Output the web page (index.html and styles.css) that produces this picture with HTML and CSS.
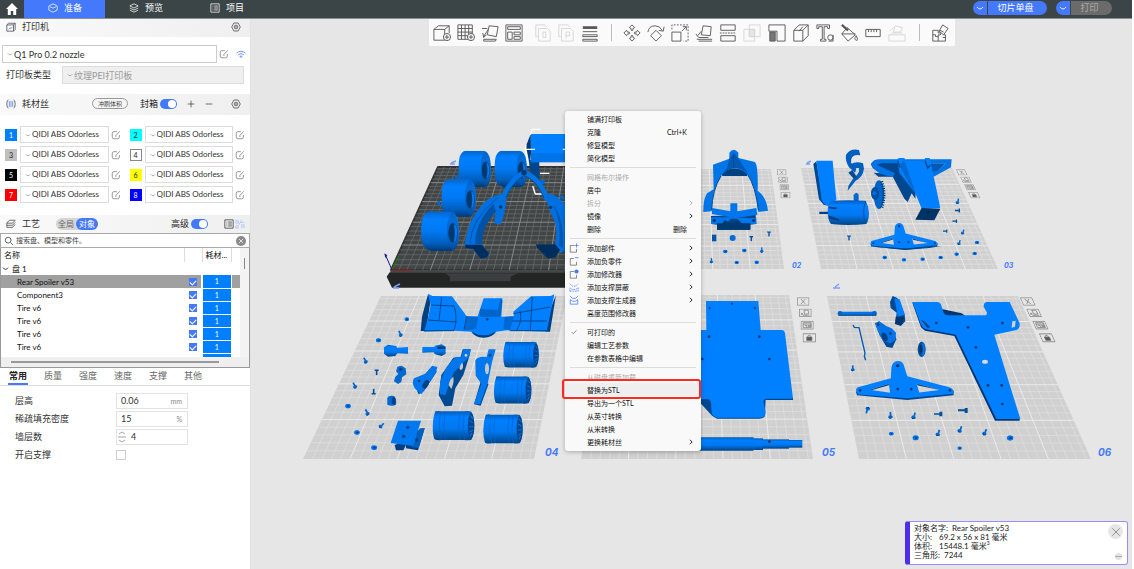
FILE: index.html
```html
<!DOCTYPE html>
<html lang="zh-CN">
<head>
<meta charset="utf-8">
<title>准备</title>
<link rel="stylesheet" href="styles.css">
</head>
<body>
<svg class="defs" aria-hidden="true">
  <defs>
    <symbol id="i-edit" viewBox="0 0 12 12"><path d="M7 2H3.500Q1.500 2 1.500 4v4.500Q1.500 10.500 3.500 10.500H8q2 0 2-2V6M5.500 7l5-5.500M5 7.500h1.500"/></symbol>
    <symbol id="i-gear" viewBox="0 0 12 12"><path d="M3.500 1.200h5L11.200 6 8.500 10.800h-5L.8 6z"/><circle cx="6" cy="6" r="2.200"/><circle cx="6" cy="6" r=".5"/></symbol>
    <symbol id="i-down" viewBox="0 0 8 8"><path d="M1 3q1.500 2 3 2t3-2"/></symbol>
    <symbol id="i-right" viewBox="0 0 8 8"><path d="M2.500 1l3 3-3 3"/></symbol>
    <symbol id="i-list" viewBox="0 0 12 12"><path d="M1 1h10v10H1zM3 3.700h1M5 3.700h4.500M3 6h1M5 6h4.500M3 8.300h1M5 8.300h4.500"/></symbol>
    <symbol id="i-layers" viewBox="0 0 12 12"><path d="M6 1l5 2.500L6 6 1 3.500zM1 6l5 2.500L11 6M1 8.500L6 11l5-2.500"/></symbol>
    <linearGradient id="g-round" x1="0" y1="0" x2="0" y2="1"><stop offset="0" stop-color="#0066cc"/><stop offset=".2" stop-color="#007fff"/><stop offset=".5" stop-color="#0079f2"/><stop offset=".8" stop-color="#005fbf"/><stop offset="1" stop-color="#003a75"/></linearGradient>
    <linearGradient id="g-drum" x1="0" y1="0" x2="0" y2="1"><stop offset="0" stop-color="#005bb8"/><stop offset=".2" stop-color="#007fff"/><stop offset=".6" stop-color="#0078f0"/><stop offset="1" stop-color="#004486"/></linearGradient>
    <symbol id="tire" viewBox="0 0 100 112" preserveAspectRatio="none">
      <path fill="url(#g-round)" d="M22 0H76Q94 2 98 30Q102 60 98 84Q94 110 80 111H28Q6 108 2 82Q-2 50 3 24Q7 3 22 0z"/>
      <path fill="#0058b0" opacity=".5" d="M82 4Q97 12 99 50Q99 96 84 109Q68 96 68 56Q68 16 82 4z"/>
      <ellipse cx="84" cy="60" rx="12" ry="27" fill="#003870"/>
      <path fill="#0079f2" d="M86 36Q96 40 95 62Q94 84 86 86Q92 62 86 36z"/>
    </symbol>
    <symbol id="drum" viewBox="0 0 120 90" preserveAspectRatio="none">
      <path fill="url(#g-drum)" d="M8 2Q16 0 24 2H90Q100 0 110 3Q118 20 118 45T110 87Q100 90 90 88H26Q14 90 6 86Q0 70 1 45T8 2z"/>
      <ellipse cx="109" cy="45" rx="9" ry="38" fill="#00458c"/>
      <path d="M106 14l8 10M104 30l10 6M104 48h12M105 64l9-6M107 76l5-10" stroke="#0077ee" stroke-width="3"/>
      <path d="M24 3Q15 45 26 87M36 3Q28 45 36 87M78 3Q70 45 78 87M90 3Q83 45 90 87" fill="none" stroke="#0066cc" stroke-width="2"/>
    </symbol>
    <symbol id="screw" viewBox="0 0 20 24" overflow="visible"><path fill="#0068d1" d="M7 2l6-1 1 12 4 3-1 5-8 3-6-4 1-6 4-1z"/><path fill="#003a75" d="M3 20l6 4 8-3-7 0z"/></symbol>
    <symbol id="bolt" viewBox="0 0 20 24"><path fill="#00509f" d="M2 1h15l1 6h-5v15l-6 1V7L2 6z"/></symbol>
    <symbol id="nut" viewBox="0 0 20 16"><path fill="#0074e8" d="M3 2l6-2 8 2 3 5-3 7-8 2-7-3L0 7z"/><ellipse cx="11" cy="8" rx="4" ry="3" fill="#003f80"/></symbol>
    <symbol id="arm" viewBox="0 0 300 118" overflow="visible">
      <path fill="#00478f" d="M0 92l4 12 152 14 140-14v-14z"/>
      <path fill="#007fff" d="M108 18Q112 0 130 0Q144 2 147 18L156 46L286 80Q300 88 296 99L156 113L8 101Q-4 91 4 80L106 52z"/>
      <path fill="#d3d3d3" d="M42 87L104 96L100 69zM184 68L192 95L254 88z"/>
      <path fill="#00478f" d="M42 87l58-18v4l-50 15zM184 68l70 20-66-14z"/>
      <g fill="#003870"><circle cx="127" cy="14" r="5"/><circle cx="127" cy="85" r="4"/><circle cx="168" cy="85" r="4"/><circle cx="13" cy="89" r="4"/><circle cx="285" cy="89" r="4"/></g>
    </symbol>
    <symbol id="p-close" viewBox="0 0 36 24"><path d="M1 1h34v22H1zM12 5l12 14M24 5L12 19"/></symbol>
    <symbol id="p-arrange" viewBox="0 0 36 24"><path d="M1 1h34v22H1zM14 5l12-1 2 11-12 1zM6 12l5 7h19M5 17l7-4"/></symbol>
    <symbol id="p-layout" viewBox="0 0 36 24"><path d="M1 1h34v22H1zM7 5h22v14H7zM7 9h22M11 13h6v6M20 13h9M20 16h9"/></symbol>
    <symbol id="p-lock" viewBox="0 0 36 24"><path d="M1 1h34v22H1zM14 11V7q4-4 8 0v4"/><path class="solid" d="M11 10h14v9H11z"/></symbol>
  </defs>
</svg>

<div class="app">
  <header class="topbar">
    <button class="home" aria-label="主页"><svg viewBox="0 0 12 12"><path d="M6 0L0 6h1.800v6h3V8h2.400v4h3V6H12z"/></svg></button>
    <nav class="main-tabs">
      <button class="main-tab active"><svg class="ico" viewBox="0 0 12 12"><path d="M6 1l5 2.500v5L6 11 1 8.500v-5zM2.500 4.500L6 6.200l3.500-1.700"/></svg>准备</button>
      <button class="main-tab"><svg class="ico"><use href="#i-layers"/></svg>预览</button>
      <button class="main-tab"><svg class="ico"><use href="#i-list"/></svg>项目</button>
    </nav>
    <div class="actions">
      <div class="split"><button class="split-more" aria-label="切片选项"><svg class="ico"><use href="#i-down"/></svg></button><button class="split-main wide">切片单盘</button></div>
      <div class="split"><button class="split-more" aria-label="打印选项"><svg class="ico"><use href="#i-down"/></svg></button><button class="split-main off" disabled>打印</button></div>
    </div>
  </header>

  <div class="body">
    <aside class="sidebar">
      <div class="head">
        <svg class="ico" viewBox="0 0 12 12"><path d="M1 3.500L3 1.500h8v7.500l-2 2H1zM1 3.500h8v7.500M9 3.500l2-2"/><path class="accent" d="M3 9l2-2 1 1 1.500-2"/></svg>
        <h2>打印机</h2>
        <button class="plain push" aria-label="打印机设置"><svg class="ico"><use href="#i-gear"/></svg></button>
      </div>
      <div class="printer">
        <div class="line">
          <span class="select big"><svg class="ico"><use href="#i-down"/></svg><select aria-label="打印机"><option>Q1 Pro 0.2 nozzle</option></select></span>
          <button class="plain" aria-label="编辑"><svg class="ico soft"><use href="#i-edit"/></svg></button>
          <button class="plain wifi" aria-label="连接"><svg class="ico" viewBox="0 0 12 12"><path d="M.5 5Q6 .5 11.500 5M2.500 7Q6 4 9.500 7M4.500 9Q6 7.500 7.500 9L6 10z"/></svg></button>
        </div>
        <div class="line plate-line">
          <label for="plate">打印板类型</label>
          <span class="select big off"><svg class="ico"><use href="#i-down"/></svg><select id="plate" disabled><option>纹理PEI打印板</option></select></span>
        </div>
      </div>

      <div class="head tall">
        <svg class="ico" viewBox="0 0 12 12"><path d="M3 1Q1 1 1 6t2 5M9 1q2 0 2 5T9 11"/><path class="accent" d="M4 2.500v7M6 2.500v7M8 2.500v7"/></svg>
        <h2>耗材丝</h2>
        <button class="flush push">冲刷体积</button>
        <label class="toggle">封箱<input type="checkbox" role="switch" checked></label>
        <button class="plain" aria-label="添加"><svg class="ico" viewBox="0 0 12 12"><path d="M6 2v8M2 6h8"/></svg></button>
        <button class="plain" aria-label="移除"><svg class="ico" viewBox="0 0 12 12"><path d="M2 6h8"/></svg></button>
        <button class="plain gear" aria-label="耗材设置"><svg class="ico"><use href="#i-gear"/></svg></button>
      </div>
      <div class="filaments">
        <div class="fil"><b class="chip c1">1</b><span class="select"><svg class="ico"><use href="#i-down"/></svg><select aria-label="耗材 1"><option>QIDI ABS Odorless</option></select></span><button class="plain" aria-label="编辑 1"><svg class="ico soft"><use href="#i-edit"/></svg></button></div>
        <div class="fil"><b class="chip c2">2</b><span class="select"><svg class="ico"><use href="#i-down"/></svg><select aria-label="耗材 2"><option>QIDI ABS Odorless</option></select></span><button class="plain" aria-label="编辑 2"><svg class="ico soft"><use href="#i-edit"/></svg></button></div>
        <div class="fil"><b class="chip c3">3</b><span class="select"><svg class="ico"><use href="#i-down"/></svg><select aria-label="耗材 3"><option>QIDI ABS Odorless</option></select></span><button class="plain" aria-label="编辑 3"><svg class="ico soft"><use href="#i-edit"/></svg></button></div>
        <div class="fil"><b class="chip c4">4</b><span class="select"><svg class="ico"><use href="#i-down"/></svg><select aria-label="耗材 4"><option>QIDI ABS Odorless</option></select></span><button class="plain" aria-label="编辑 4"><svg class="ico soft"><use href="#i-edit"/></svg></button></div>
        <div class="fil"><b class="chip c5">5</b><span class="select"><svg class="ico"><use href="#i-down"/></svg><select aria-label="耗材 5"><option>QIDI ABS Odorless</option></select></span><button class="plain" aria-label="编辑 5"><svg class="ico soft"><use href="#i-edit"/></svg></button></div>
        <div class="fil"><b class="chip c6">6</b><span class="select"><svg class="ico"><use href="#i-down"/></svg><select aria-label="耗材 6"><option>QIDI ABS Odorless</option></select></span><button class="plain" aria-label="编辑 6"><svg class="ico soft"><use href="#i-edit"/></svg></button></div>
        <div class="fil"><b class="chip c7">7</b><span class="select"><svg class="ico"><use href="#i-down"/></svg><select aria-label="耗材 7"><option>QIDI ABS Odorless</option></select></span><button class="plain" aria-label="编辑 7"><svg class="ico soft"><use href="#i-edit"/></svg></button></div>
        <div class="fil"><b class="chip c8">8</b><span class="select"><svg class="ico"><use href="#i-down"/></svg><select aria-label="耗材 8"><option>QIDI ABS Odorless</option></select></span><button class="plain" aria-label="编辑 8"><svg class="ico soft"><use href="#i-edit"/></svg></button></div>
      </div>

      <div class="head process">
        <svg class="ico" viewBox="0 0 12 12"><path d="M4 1.500h7L8 5H1zM1 7.500h7l3-3.500M1 10h7l3-3.500M1 5v5"/></svg>
        <h2>工艺</h2>
        <div class="scope"><button>全局</button><button class="on">对象</button></div>
        <label class="toggle push">高级<input type="checkbox" role="switch" checked></label>
        <button class="plain list-btn" aria-label="列表"><svg class="ico"><use href="#i-list"/></svg></button>
        <button class="plain pale" aria-label="参数"><svg class="ico" viewBox="0 0 12 12"><path d="M1 2h3v3H1zM8 1l-4 7M6 4h5M3 8H1v3h3zM8 7h3v3H8z"/></svg></button>
      </div>
      <div class="search">
        <svg class="ico" viewBox="0 0 12 12"><circle cx="5" cy="5" r="3.500"/><path d="M8 8l3 3"/></svg>
        <input type="text" aria-label="搜索" placeholder="搜索盘、模型和零件。">
        <button class="clear" aria-label="清除"><svg class="ico" viewBox="0 0 12 12"><path d="M3.500 3.500l5 5M8.500 3.500l-5 5"/></svg></button>
      </div>
      <div class="tree">
        <div class="tree-view">
          <table>
            <colgroup><col><col class="col-check"><col class="col-fil"><col class="col-end"></colgroup>
            <thead><tr><th>名称</th><th></th><th>耗材...</th><th></th></tr></thead>
            <tbody>
              <tr><td class="group"><svg class="ico"><use href="#i-down"/></svg>盘 1</td><td></td><td></td><td></td></tr>
              <tr class="sel"><td>Rear Spoiler v53</td><td><input type="checkbox" aria-label="Rear Spoiler v53" checked></td><td class="num">1</td><td></td></tr>
              <tr><td>Component3</td><td><input type="checkbox" aria-label="Component3" checked></td><td class="num">1</td><td></td></tr>
              <tr><td>Tire v6</td><td><input type="checkbox" aria-label="Tire v6" checked></td><td class="num">1</td><td></td></tr>
              <tr><td>Tire v6</td><td><input type="checkbox" aria-label="Tire v6" checked></td><td class="num">1</td><td></td></tr>
              <tr><td>Tire v6</td><td><input type="checkbox" aria-label="Tire v6" checked></td><td class="num">1</td><td></td></tr>
              <tr><td>Tire v6</td><td><input type="checkbox" aria-label="Tire v6" checked></td><td class="num">1</td><td></td></tr>
              <tr><td></td><td></td><td class="num"></td><td></td></tr>
            </tbody>
          </table>
          <div class="vbar"><i></i></div>
        </div>
        <div class="hbar"><i></i></div>
      </div>

      <nav class="tabs">
        <button class="on">常用</button><button>质量</button><button>强度</button><button>速度</button><button>支撑</button><button>其他</button>
      </nav>
      <div class="fields">
        <label for="f1">层高</label><span class="field"><input id="f1" type="text" value="0.06"><em>mm</em></span>
        <label for="f2">稀疏填充密度</label><span class="field"><input id="f2" type="text" value="15"><em>%</em></span>
        <label for="f3">墙层数</label><span class="field spin"><svg class="ico" viewBox="0 0 8 14"><path d="M1 4l3-2 3 2M0 7h8M1 10l3 2 3-2"/></svg><input id="f3" type="text" value="4"></span>
        <label for="f4">开启支撑</label><input id="f4" class="box" type="checkbox">
      </div>
    </aside>

    <main class="stage">
      <svg class="scene" viewBox="251 19 881 550" preserveAspectRatio="xMinYMin slice" role="img" aria-label="打印盘">
        <g id="plates"></g>

        <!-- plate 1 -->
        <svg x="380" y="110" width="190" height="190" viewBox="0 0 570 570" overflow="visible">
          <path fill="#454848" d="M34 480H620V489H28z"/>
          <path fill="#242525" d="M28 488H620V533H36L20 500z"/><path fill="#3b3e3e" d="M195 490H415L392 500V514H210V500z"/>
          <path d="M36 480L16 434" stroke="#1c1c8c" stroke-width="3"/><path d="M36 478L56 438" stroke="#118811" stroke-width="3"/><path d="M36 480H96" stroke="#a31515" stroke-width="3"/>
          <path fill="#1c1c8c" d="M13 430l9 6-6 8z"/>
          <g fill="#0068d1"><path d="M224 198l10-5 2 8-9 5zM168 276l12-4 2 20-9-10zM478 210h16v12h-16zM533 256l18 2 12 12-18-2z"/></g>
          <use href="#tire" x="235" y="122" width="98" height="110"/>
          <use href="#tire" x="343" y="122" width="98" height="110"/>
          <use href="#tire" x="184" y="207" width="104" height="114"/>
          <use href="#tire" x="123" y="304" width="114" height="120"/>
          <path fill="#00468c" d="M446 150h32v76l-26-34z"/><path fill="#007fff" d="M452 72H620V157H452z"/><path fill="#0068d1" opacity=".5" d="M452 130H620V157H450z"/><path fill="#003a75" d="M452 72l-14 36 10 50 5-28z"/>
          <path fill="none" stroke="#fff" stroke-width="4" d="M482 58H457l-6 16M439 118h26M548 118h14M480 190h28M458 228l8 24h20M438 104l-2 16 9 44"/>
          <path fill="none" stroke="#0073e6" stroke-width="15" d="M366 270Q392 206 432 188Q478 202 502 270"/>
          <path fill="none" stroke="#0052a5" stroke-width="3" d="M374 272Q396 214 432 197Q470 210 492 264"/>
          <path fill="#0070e0" d="M254 408Q260 330 316 274Q340 256 374 250L380 268Q374 314 362 344L343 340L346 302Q304 340 305 402L328 432L322 442L302 446L280 420L257 414z"/>
          <path fill="#0052a5" d="M286 402Q284 340 340 282L348 304Q308 344 305 402z"/><path fill="none" stroke="#0055aa" stroke-width="3" d="M270 400Q272 330 352 264"/>
          <path fill="#002e5c" d="M255 404H305L327 430L322 442L302 446L280 418L257 414z"/>
          <path fill="#0070e0" d="M496 262L508 250Q546 262 576 312V410L540 430L524 405Q538 350 512 310z"/>
          <path fill="#0058b0" d="M520 284Q552 320 548 414L536 406Q546 340 520 284z"/><path fill="#002e5c" d="M468 403H526L540 420L526 442L505 446L470 412z"/>
          <g fill="#003870"><circle cx="432" cy="188" r="8"/><circle cx="362" cy="291" r="5"/><circle cx="512" cy="292" r="5"/><circle cx="312" cy="433" r="4"/><circle cx="494" cy="433" r="4"/></g>
        </svg>

        <!-- plate 4 -->
        <svg x="300" y="285" width="270" height="180" viewBox="0 0 810 540" overflow="visible">
          <path fill="#003f80" d="M362 138L366 95L384 28L392 45L378 138z"/><path fill="#003f80" d="M768 30L750 140H736L752 70z"/>
          <path fill="#007fff" d="M384 26L397 33L456 34L500 94H533L551 40H607V52L604 95L642 94L640 80L693 34L752 33L763 28L740 140L620 136L588 140Q578 156 550 157Q524 154 514 140L462 137L372 140L384 100L392 60z"/>
          <path fill="#0064c8" d="M540 72l54 3 8-35 5 8-6 47h-62z"/><path fill="#0068d1" d="M500 94l34 3-6 35-34 4zM614 96l28-2-12 40-20-2z"/>
          <path fill="none" stroke="#00498f" stroke-width="3" d="M392 60l70 3M384 105l86 6M425 36l-8 70M462 62q12 40 0 74M500 94l-8 40M640 86l110-20M660 78q8 30-10 58M697 36l-6 98M636 108h104M372 137h90M630 137h110"/>
          <path fill="#003f80" d="M514 140Q550 162 588 140Q578 156 550 158Q524 156 514 140z"/><circle cx="562" cy="103" r="4" fill="#003f80"/>
          <use href="#drum" x="609" y="169" width="109" height="80"/><use href="#drum" x="581" y="273" width="115" height="84"/><use href="#drum" x="397" y="377" width="128" height="90"/><use href="#drum" x="549" y="387" width="121" height="90"/>
          <g fill="url(#g-drum)"><path d="M252 187l12-8 24 4 4 5 32-2v20l-32-1-6 8-22 2-12-9z"/><path d="M367 186h36l2-4 20-4 12 8v20l-12 7-20-5-4-6-34 1z"/></g>
          <path fill="#003f80" d="M412 184h24v8h-24z"/>
          <path fill="#0068d1" d="M292 245l12-3 13 8 2 18-13 9-2 14-10 6-12-8 4-14 9-8-7-8z"/><circle cx="302" cy="253" r="5" fill="#003f80"/>
          <path fill="#003f80" d="M340 290l16 38 16-10 38-58-6-12-46 30z"/><path fill="#0076ec" d="M342 280L376 266L396 242L412 246L408 262L384 300L364 328L344 310Q334 292 342 280z"/><ellipse cx="377" cy="298" rx="8" ry="14" fill="#003f80" transform="rotate(30 377 298)"/><circle cx="357" cy="288" r="4" fill="#003f80"/>
          <path fill="#004a94" d="M416 330L424 270L460 218L482 215L488 193H512L508 214L490 270L466 310L456 362L434 364z"/>
          <path fill="#0076ec" d="M420 290L440 246L466 216H484L490 193H513L507 216L480 244L462 262L436 330L420 328z"/>
          <path fill="#c8c8c8" d="M446 300q4-20 14-24q4 14-6 36zM478 250q4-16 10-16q4 18-6 22z"/><circle cx="498" cy="211" r="4" fill="#d3d3d3"/>
          <path fill="#004a94" d="M542 290l-20 68 20 4 24-66z"/><path fill="#0078f0" d="M526 226Q534 212 560 216L566 193H587L576 232L564 292L540 358L522 356L544 296L527 272z"/><ellipse cx="561" cy="251" rx="6" ry="17" fill="#c8c8c8"/><circle cx="570" cy="211" r="4" fill="#003f80"/>
          <path fill="#003f80" d="M284 480l20-8 14 8-8 16H288zM318 474l28-30 14-12 14-2-20 66-36-6z"/><path fill="#0060c0" d="M360 430h14l-18 60-22-4z"/><path fill="#0078f0" d="M294 407H363L340 483L272 474z"/><circle cx="323" cy="427" r="5" fill="#003f80"/><circle cx="311" cy="454" r="5" fill="#003f80"/><circle cx="350" cy="465" r="5" fill="#003f80"/>
          <path fill="#0068d1" d="M262 338q4-8 20-5 8 6 6 26-12 6-26 0z"/><ellipse cx="281" cy="348" rx="6" ry="11" fill="#003f80"/>
          <use href="#nut" x="313" y="96" width="15" height="13"/><use href="#nut" x="227" y="159" width="17" height="14"/><use href="#nut" x="135" y="356" width="18" height="15"/><use href="#nut" x="162" y="435" width="18" height="15"/><use href="#nut" x="213" y="480" width="19" height="16"/>
          <g transform="rotate(-25 300 146)"><use href="#screw" x="291" y="136" width="18" height="20"/></g><g transform="rotate(-25 195 226)"><use href="#screw" x="186" y="216" width="18" height="20"/></g><g transform="rotate(-25 163 301)"><use href="#screw" x="154" y="291" width="18" height="20"/></g><g transform="rotate(-25 200 381)"><use href="#screw" x="191" y="371" width="18" height="21"/></g><g transform="rotate(45 245 421)"><use href="#screw" x="235" y="411" width="20" height="20"/></g><use href="#bolt" x="222" y="251" width="16" height="22"/><g transform="rotate(180 221 320)"><use href="#bolt" x="213" y="309" width="16" height="22"/></g>
        </svg>

        <!-- plates 2 and 3 -->
        <svg x="695" y="140" width="335" height="140" viewBox="0 0 1005 420" overflow="visible">
          <path fill="#003f80" d="M80 100Q116 70 158 100L156 108H82z"/>
          <path fill="#0075e8" d="M103 38Q116 20 130 38V54L180 66Q190 78 188 152Q214 170 219 212L190 216Q184 140 158 104Q116 62 78 108Q50 150 50 214L25 216Q24 180 36 160L56 148L54 74L103 56z"/>
          <path fill="#0059b3" d="M103 56L116 38L130 54L158 100Q116 66 80 104L96 84z"/><path fill="none" stroke="#00478f" stroke-width="3" d="M78 108Q52 150 50 210M158 104Q182 140 190 210M116 40v44"/>
          <path fill="#00448a" d="M48 228L182 225L184 252L166 254V270H66V254L48 252z"/>
          <path fill="#0076ec" d="M51 204L106 214V190H127V214L184 204L187 224L128 234H184V252H142L126 236H108L92 252H48V232H106L51 222z"/>
          <path fill="#003870" d="M66 250H166V268H66zM90 240l16 10H82zM130 240l10 10h-26z"/><circle cx="58" cy="241" r="5" fill="#003870"/><circle cx="176" cy="241" r="5" fill="#003870"/>
          <path fill="#0055aa" d="M51 284h13v20H51z"/><circle cx="113" cy="294" r="9" fill="#006ad6"/>
          <use href="#bolt" x="162" y="286" width="14" height="20"/><use href="#bolt" x="215" y="273" width="14" height="18"/><use href="#screw" x="193" y="320" width="14" height="19"/><use href="#screw" x="42" y="352" width="14" height="19"/><use href="#nut" x="84" y="328" width="14" height="13"/><use href="#nut" x="141" y="325" width="14" height="13"/><use href="#nut" x="118" y="362" width="14" height="11"/><use href="#nut" x="178" y="361" width="14" height="12"/>

          <path fill="#00478f" d="M355 72L364 64L386 186L404 198L386 194L372 178z"/><path fill="#007fff" d="M364 62H413L424 180L404 198Q386 196 380 180z"/>
          <path fill="#0068d1" d="M476 166q7-14 15-2v22h-15z"/><path fill="url(#g-drum)" d="M408 184Q440 178 512 182Q522 200 522 220T514 252Q460 258 408 252Q398 240 398 215T408 184z"/><path fill="#003f80" d="M373 215h26v7h-26zM402 200l26 3-6 5-20-3zM402 226l30 12v5l-30-7z"/><path d="M512 184q-12 34 0 68" fill="none" stroke="#00529f" stroke-width="3"/>
          <path fill="#0060c0" d="M453 44Q466 24 492 30L496 46Q466 40 468 68L484 86L480 98L462 82Q450 62 453 44z"/><path fill="#0060c0" d="M468 72Q484 62 504 70L507 86Q504 110 482 122L458 152L460 138L474 116Q496 100 492 84H470z"/><path fill="#004a94" d="M460 98l12-8 14 22-6 8z"/>
          <ellipse cx="552" cy="164" rx="16" ry="43" fill="#0064c8"/><path d="M560 124q14 40 0 80" fill="none" stroke="#003870" stroke-width="9" stroke-dasharray="3 4"/><ellipse cx="540" cy="160" rx="12" ry="19" fill="#0050a0"/><circle cx="538" cy="160" r="6" fill="#0070e0"/>
          <path fill="#00478f" d="M528 72L540 60H640L650 110H550L536 98L560 100Q530 88 528 72z"/><path fill="#0073e6" d="M528 72Q534 56 560 58H770L768 82L716 110L706 96L730 90L752 70L700 70H560L546 74L600 100V112Q540 104 528 72z"/><path fill="#005ab4" d="M700 70h52l-24 22-22 5z"/>
          <path fill="#00478f" d="M594 112L606 84L662 160L661 176L650 160L638 186L628 176z"/><path fill="#007fff" d="M606 58L612 54H628L632 62L688 62L690 54H704L714 100L736 204L680 206L661 160L614 100z"/><path fill="#003366" d="M680 204L736 206L718 241L661 239z"/><path fill="#0068d1" d="M628 62l34 98-8-8-42-78z"/><circle cx="700" cy="217" r="3" fill="#001a33"/><path d="M690 62l8 22 8-8M608 62l6 20" stroke="#00478f" stroke-width="4" fill="none"/>
          <use href="#arm" x="509" y="249" width="238" height="80"/>
          <path fill="#00478f" d="M512 318l118 8 112-8-40 6-72 6z"/>
          <g transform="rotate(15 788 183)"><use href="#screw" x="781" y="174" width="15" height="19"/></g><g transform="rotate(90 787 211)"><use href="#bolt" x="780" y="202" width="15" height="18"/></g><g transform="rotate(90 779 243)"><use href="#bolt" x="772" y="235" width="15" height="16"/></g><g transform="rotate(90 751 273)"><use href="#bolt" x="744" y="266" width="15" height="15"/></g><g transform="rotate(20 804 275)"><use href="#screw" x="797" y="266" width="14" height="19"/></g><g transform="rotate(20 793 307)"><use href="#screw" x="786" y="298" width="14" height="18"/></g><use href="#bolt" x="455" y="284" width="14" height="20"/>
          <use href="#nut" x="838" y="302" width="16" height="11"/><use href="#nut" x="831" y="335" width="16" height="11"/><use href="#nut" x="777" y="337" width="16" height="11"/><use href="#nut" x="729" y="347" width="16" height="11"/><use href="#nut" x="675" y="352" width="16" height="11"/><use href="#nut" x="619" y="354" width="16" height="11"/><use href="#nut" x="562" y="346" width="14" height="13"/>
          <g class="plate-ico"><use href="#p-close" x="245" y="88" width="30" height="18"/><use href="#p-arrange" x="249" y="110" width="30" height="18"/><use href="#p-layout" x="253" y="133" width="30" height="18"/><use href="#p-lock" x="256" y="156" width="31" height="19"/></g>
          <g class="plate-ico" transform="translate(-42 0) skewX(24)"><use href="#p-close" x="785" y="88" width="28" height="18"/><use href="#p-arrange" x="788" y="110" width="28" height="18"/><use href="#p-layout" x="789" y="133" width="30" height="18"/><use href="#p-lock" x="791" y="156" width="30" height="19"/></g>
        </svg>

        <!-- plates 5 and 6 -->
        <svg x="695" y="280" width="439" height="289" viewBox="0 0 1317 867" overflow="visible">
          <path fill="#00478f" d="M0 352h294v8H212l-2 48q-6 8-16 8H66l-14-8z"/><path fill="#007fff" d="M33 63H190L197 150H262Q269 151 270 160L294 356H212Q204 358 206 368L212 396Q212 412 196 413H66Q52 410 50 398L48 368Q46 358 36 357H0V150H34z"/>
          <g fill="#00366e"><circle cx="44" cy="84" r="3"/><circle cx="111" cy="71" r="3"/><circle cx="180" cy="84" r="3"/><circle cx="42" cy="170" r="4"/><circle cx="193" cy="170" r="4"/><circle cx="22" cy="237" r="4"/><circle cx="223" cy="237" r="4"/></g>
          <g fill="url(#g-drum)"><path d="M0 472H174l6 4v32l-6 4H0z"/><path d="M178 475h26v35h-26z"/><path d="M203 478h79v28h-79z"/><path d="M281 480h41v23h-41z"/></g><circle cx="223" cy="485" r="4" fill="#003366"/>
          <path fill="#0074e8" d="M430 95h114v11H430z"/><path fill="#00366e" d="M430 104h114v3H430z"/><circle cx="435" cy="100" r="7" fill="#0064c8"/><circle cx="538" cy="100" r="7" fill="#0064c8"/>
          <path fill="none" stroke="#005ab4" stroke-width="4" d="M474 135l4 7 14 1 18 76-2 10 4 12"/>
          <path fill="#004a94" d="M585 66l8-18 14 6 22 50 2 20-14 14-16-6 4-34-18-14z"/><path fill="#007fff" d="M598 55L614 58L630 104L608 110L604 84z"/><path fill="#00366e" d="M602 110l26 0-8 26-20-4z"/>
          <path fill="#004a94" d="M540 130l12-6 44 30 8 24-12 26-18-4-20-34z"/><path fill="#0074e8" d="M541 132l12-8 12 12 24 8 14 14-2 22-14 10-22-6-16-30z"/><ellipse cx="569" cy="171" rx="8" ry="14" fill="#003f80" transform="rotate(-25 569 171)"/><circle cx="586" cy="161" r="4" fill="#003f80"/><circle cx="550" cy="134" r="4" fill="#003f80"/>
          <ellipse cx="680" cy="208" rx="12" ry="23" fill="#00509f"/><ellipse cx="678" cy="208" rx="5" ry="13" fill="#003366"/><path d="M683 190q7 18 0 36" fill="none" stroke="#0076ec" stroke-width="6"/>
          <path fill="#00366e" d="M652 68L678 142L690 152L778 168L900 422H974V415L880 160L800 100z"/><path fill="#007fff" d="M652 66H728Q738 68 740 80L746 98Q750 106 760 106H868Q876 106 876 98L866 80Q866 68 874 66H944L974 130Q976 146 964 150L898 164L976 417H904L782 164L694 148Q682 144 678 134z"/>
          <path fill="#003f80" d="M678 120l8 2 20 20-8 2z"/><path fill="#d3d3d3" d="M952 124l10-2-2 18-10 3z"/><ellipse cx="870" cy="245" rx="9" ry="6" fill="#d8d8d8"/>
          <g fill="#00366e"><circle cx="724" cy="129" r="4"/><circle cx="819" cy="142" r="4"/><circle cx="922" cy="129" r="4"/><circle cx="843" cy="202" r="4"/><circle cx="879" cy="316" r="4"/><circle cx="920" cy="316" r="4"/><circle cx="922" cy="372" r="4"/></g>
          <use href="#arm" x="482" y="243" width="298" height="117"/>
          <use href="#screw" x="465" y="253" width="16" height="23"/><g transform="rotate(200 517 391)"><use href="#screw" x="508" y="380" width="18" height="22"/></g><use href="#screw" x="577" y="394" width="18" height="23"/><g transform="rotate(20 657 407)"><use href="#screw" x="648" y="394" width="18" height="26"/></g><path fill="#00509f" d="M717 400h16v-5h9v14h-9v-5h-16zM789 388h20v-4h9v15h-9v-5h-20z"/><g transform="rotate(20 730 458)"><use href="#screw" x="721" y="447" width="18" height="23"/></g><g transform="rotate(25 796 447)"><use href="#screw" x="787" y="436" width="18" height="23"/></g><g transform="rotate(25 870 456)"><use href="#screw" x="861" y="445" width="18" height="22"/></g>
          <use href="#nut" x="580" y="455" width="18" height="12"/><use href="#nut" x="652" y="465" width="20" height="17"/><use href="#nut" x="785" y="499" width="18" height="11"/><use href="#nut" x="935" y="465" width="21" height="18"/>
          <g class="plate-ico"><use href="#p-close" x="306" y="52" width="37" height="25"/><use href="#p-arrange" x="312" y="86" width="38" height="25"/><use href="#p-layout" x="317" y="122" width="39" height="27"/><use href="#p-lock" x="323" y="159" width="40" height="29"/></g>
          <g class="plate-ico" transform="translate(-29 0) skewX(24)"><use href="#p-close" x="980" y="52" width="37" height="25"/><use href="#p-arrange" x="984" y="86" width="37" height="25"/><use href="#p-layout" x="986" y="122" width="38" height="27"/><use href="#p-lock" x="989" y="159" width="39" height="29"/></g>
        </svg>

        <g class="pencil"><path d="M451 163l5-2M450 164h5M394 287l6-3M393 288h6M807 163l4-2M806 164h4M835 287l4-3M833 288h7"/></g>
        <g class="plate-no"><text x="545" y="456">04</text><text x="822" y="456">05</text><text x="1098" y="456">06</text><text class="small" x="792" y="268">02</text><text class="small" x="1004" y="268">03</text></g>
      </svg>

      <div class="toolbar" role="toolbar">
        <div class="tools four">
          <button aria-label="添加"><svg viewBox="0 0 20 20"><path d="M1 6h12v12H1zM1 6l5-4h12l-5 4M18 2v8"/><circle class="paper" cx="15.500" cy="14.500" r="4"/><path d="M15.500 12v5M13 14.500h5"/></svg></button>
          <button aria-label="添加盘"><svg viewBox="0 0 20 20"><path d="M1 1h16v16H1zM1 5h16M1 9h16M1 13h16M5 1v16M9 1v16M13 1v16"/><circle class="paper" cx="15.500" cy="14.500" r="4"/><path d="M15.500 12v5M13 14.500h5"/></svg></button>
          <button aria-label="自动朝向"><svg viewBox="0 0 20 20"><path d="M9 2l10 1-2 11-10-2zM3 17h14l-1 2H3zM1 5h6M2 10l1 5 3-3M8 6l-5 8"/></svg></button>
          <button aria-label="自动摆放"><svg viewBox="0 0 20 20"><path d="M1 1h18v18H1zM3 3h14v3H3zM3 9h5v8H3zM10 9h7v3h-7zM10 14h7v3h-7z"/></svg></button>
        </div>
        <div class="tools three">
          <button aria-label="拆分为对象" disabled><svg viewBox="0 0 20 20"><path d="M4 14H2V1h10l2 2M5 5h10l3 3v11H5zM10 9h3v6h-3z"/></svg></button>
          <button aria-label="拆分为零件" disabled><svg viewBox="0 0 20 20"><path d="M4 14H2V1h10l2 2M5 5h10l3 3v11H5zM10 16V9h4v4h-4"/></svg></button>
          <button aria-label="可变层高"><svg viewBox="0 0 20 20"><path d="M2 4h16" stroke-width="3"/><path d="M2 8.500h16M2 12h16v2H2zM2 17h16v2H2z"/></svg></button>
        </div>
        <span class="rule"></span>
        <div class="tools many">
          <button aria-label="移动"><svg viewBox="0 0 20 20"><path d="M10 1l3 3-2 1v2H9V5L7 4zM10 19l3-3-2-1v-2H9v2l-2 1zM1 10l3-3 1 2h2v2H5l-1 2zM19 10l-3-3-1 2h-2v2h2l1 2z"/></svg></button>
          <button aria-label="旋转"><svg viewBox="0 0 20 20"><path d="M10 7l6 6-6 6-6-6zM1 9Q2 2 9 2q5 0 8 5M19 3l-1 5-5-1"/></svg></button>
          <button aria-label="缩放"><svg viewBox="0 0 20 20"><path d="M1 9h10v10H1zM12 8l5-5M13 3h4v4"/><path d="M1 6V1h18v18h-5" stroke-dasharray="2 1.500"/></svg></button>
          <button aria-label="放置底面"><svg viewBox="0 0 20 20"><path d="M9 2l9 1-1 10-10-1zM2 17h17M4 19h15M1 11l3 4h11M7 8L3 13"/></svg></button>
          <button aria-label="切割"><svg viewBox="0 0 20 20"><path d="M2 7V1h16v6zM2 13v6h16v-6z"/><path d="M1 10h18" stroke-dasharray="2 1"/></svg></button>
          <button aria-label="网格布尔" disabled><svg viewBox="0 0 20 20"><path d="M1 6h12v13H1zM7 1h12v13H7z"/><path class="tint" d="M7 6h6v8H7z"/></svg></button>
          <button aria-label="支撑绘制"><svg viewBox="0 0 20 20"><path d="M1 5V1h18v18h-9V8H1z"/><path class="dark" d="M2 9h6v10H2z"/></svg></button>
          <button aria-label="Z缝绘制"><svg viewBox="0 0 20 20"><path d="M2 7h10v12H2zM2 7l6-6h10l-6 6M18 1v12l-6 6M8 8l4-5"/></svg></button>
          <button aria-label="文字"><svg viewBox="0 0 20 20"><path d="M1 1h14v4h-2V3H9v14h2v2H5v-2h2V3H3v2H1z"/><circle cx="16" cy="15" r="3"/><path d="M14 19h5v-7"/></svg></button>
          <button aria-label="上色"><svg viewBox="0 0 20 20"><path d="M8 4l9 8-8 7-7-8zM2 11h15M18 13q-3 4 0 5t0-5"/><path d="M2 1l7 6" stroke-width="2.500"/></svg></button>
          <button aria-label="测量"><svg viewBox="0 0 20 20"><path d="M2 6h16v8H2zM5 6v3M8 6v3M11 6v3M14 6v3"/></svg></button>
          <button aria-label="装配" disabled><svg viewBox="0 0 20 20"><path d="M1 12h18v7H1zM4 10h12M8 2l8 2-2 5H6zM2 8l4-4"/></svg></button>
        </div>
        <span class="rule"></span>
        <button class="last" aria-label="装配视图"><svg viewBox="0 0 20 20"><path d="M2 7h6v3q3-1 3 1t-3 1v7H2zM8 19h8v-7h-2M2 12h3v2h3M13 1l6 4-5 7-5-4zM10 7l4 2M13 15h3"/></svg></button>
      </div>

      <ul class="menu" role="menu">
        <li><span>铺满打印板</span></li>
        <li><span>克隆</span><kbd>Ctrl+K</kbd></li>
        <li><span>修复模型</span></li>
        <li><span>简化模型</span></li>
        <li class="sep"></li>
        <li class="off"><span>网格布尔操作</span></li>
        <li><span>居中</span></li>
        <li class="off"><span>拆分</span><svg class="ico arrow"><use href="#i-right"/></svg></li>
        <li><span>镜像</span><svg class="ico arrow"><use href="#i-right"/></svg></li>
        <li><span>删除</span><kbd>删除</kbd></li>
        <li class="sep"></li>
        <li><svg class="ico mark" viewBox="0 0 12 12"><path d="M6 3H1.500v8H9V7"/><path class="accent" d="M9 .5v5M6.500 3h5"/></svg><span>添加部件</span><svg class="ico arrow"><use href="#i-right"/></svg></li>
        <li><svg class="ico mark" viewBox="0 0 12 12"><path d="M6 3H1.500v8H9V7"/><path class="accent" d="M7 2h4.500"/></svg><span>添加负零件</span><svg class="ico arrow"><use href="#i-right"/></svg></li>
        <li><svg class="ico mark" viewBox="0 0 12 12"><path d="M6 3H1.500v8H9V7"/><circle class="dot" cx="9" cy="3" r="2.500"/></svg><span>添加修改器</span><svg class="ico arrow"><use href="#i-right"/></svg></li>
        <li><svg class="ico mark" viewBox="0 0 12 12"><path class="accent" d="M1 2l3 3h4l3-3M1 11V7l3 2h4l3-2v4z" stroke-dasharray="2 1"/></svg><span>添加支撑屏蔽</span><svg class="ico arrow"><use href="#i-right"/></svg></li>
        <li><svg class="ico mark" viewBox="0 0 12 12"><path class="accent" d="M1 1l3 3h4l3-3M1.500 11V5.500l3 2h3l3-2V11z"/></svg><span>添加支撑生成器</span><svg class="ico arrow"><use href="#i-right"/></svg></li>
        <li><span>高度范围修改器</span></li>
        <li class="sep"></li>
        <li><svg class="ico mark" viewBox="0 0 12 12"><path d="M3 6l2 2 4-4"/></svg><span>可打印的</span></li>
        <li><span>编辑工艺参数</span></li>
        <li><span>在参数表格中编辑</span></li>
        <li class="sep"></li>
        <li class="off"><span>从磁盘重新加载</span></li>
        <li class="hot"><span>替换为STL</span></li>
        <li><span>导出为一个STL</span></li>
        <li><span>从英寸转换</span></li>
        <li><span>从米转换</span></li>
        <li><span>更换耗材丝</span><svg class="ico arrow"><use href="#i-right"/></svg></li>
      </ul>

      <section class="info">
        <dl>
          <div><dt>对象名字:</dt><dd>Rear Spoiler v53</dd></div>
          <div class="wide-gap"><dt>大小:</dt><dd>69.2 x 56 x 81 毫米</dd></div>
          <div class="wide-gap"><dt>体积:</dt><dd>15448.1 毫米<sup>3</sup></dd></div>
          <div><dt>三角形:</dt><dd>7244</dd></div>
        </dl>
        <div class="info-btns">
          <button class="x" aria-label="关闭"><svg class="ico" viewBox="0 0 12 12"><path d="M1.500 1.500l9 9M10.500 1.500l-9 9"/></svg></button>
          <button class="min" aria-label="最小化"></button>
        </div>
      </section>
    </main>
  </div>
</div>
<script src="scene.js"></script>
</body>
</html>
```

FILE: styles.css
```css
* { box-sizing: border-box; }
body { margin: 0; padding-right: 2px; background: #fff; color: #333; font: 9px/12px Lato, "Noto Sans CJK SC", sans-serif; }
button, input, select { margin: 0; padding: 0; border: 0; background: none; color: inherit; font: inherit; border-radius: 0; }
input, select { outline: 0; min-width: 0; }
select { appearance: none; opacity: 1; }
h2 { margin: 0; font-size: 9px; font-weight: 400; }
.defs { position: absolute; width: 0; height: 0; }
.ico { display: block; width: 10px; height: 10px; flex: none; fill: none; stroke: currentColor; stroke-width: .9; }
.soft { color: #777; }
.accent { stroke: #4479fb; }
.push { margin-left: auto; }
.app { display: flex; flex-direction: column; height: 100vh; }

.topbar { display: flex; flex: none; height: 19px; background: #3b4446; border-bottom: 1px solid #8b9091; color: #fff; }
.home { width: 24px; display: grid; place-items: center; }
.home svg { width: 12px; height: 12px; fill: #fff; }
.main-tabs { display: flex; }
.main-tab { width: 81px; display: flex; align-items: center; justify-content: center; gap: 6px; padding: 0 0 3px 1px; }
.main-tab.active { background: #4479fb; }
.actions { display: flex; gap: 9px; margin-left: auto; padding: 1px 20px 3px 0; }
.split { display: flex; gap: 1px; }
.split-more { width: 14px; padding-left: 3px; border-radius: 7px 0 0 7px; background: #4479fb; }
.split-more .ico { width: 8px; height: 8px; }
.split-main { width: 41px; border-radius: 0 7px 7px 0; background: #4479fb; line-height: 12px; }
.split-main.wide { width: 59px; padding-right: 4px; }
.split-main.off { background: #6b6b6b; color: #aaa; padding-right: 4px; }

.body { display: flex; flex: 1; min-height: 0; }
.sidebar { flex: none; width: 251px; background: #fff; border-right: 1px solid #e2e2e2; overflow: hidden; }
.head { display: flex; align-items: center; height: 18px; padding: 0 9px 2px 6px; background: linear-gradient(to right, #fafafa, #efefef); color: #444; }
.head.tall { height: 21px; }
.head.process { padding: 0 5px 0 6px; }
.head h2 { margin-left: 6px; color: #333; }
.plain { flex: none; display: block; }
.gear { margin-left: 17px; }
.head .plain + .plain:not(.gear):not(.pale) { margin-left: 8px; }
.toggle { display: flex; align-items: center; gap: 2px; margin-right: 9px; color: #222; }
.toggle.push { margin-right: 16px; }
.toggle input { appearance: none; width: 17px; height: 10px; border-radius: 5px; background: #4479fb; display: flex; justify-content: flex-end; padding: 1px; }
.toggle input::after { content: ""; width: 8px; height: 8px; border-radius: 50%; background: #fff; }
.flush { width: 36px; height: 11px; border: 1px solid #999; border-radius: 6px; font-size: 6px; line-height: 9px; margin-right: 12px; }
.push.flush { margin-left: auto; }
.printer { padding: 8px 3px 10px 2px; display: grid; gap: 3px; }
.line { display: flex; align-items: center; gap: 2px; }
.select { display: flex; align-items: center; height: 17px; padding-left: 4px; border: 1px solid #dcdcdc; background: #fff; font-size: 8px; color: #333; flex: 1; min-width: 0; }
.select .ico { width: 6px; height: 6px; color: #888; margin-right: 1px; }
.select select { flex: 1; height: 15px; line-height: 15px; }
.select.big { height: 18px; font-size: 9px; border-color: #ccc; padding-left: 4px; }
.select.big.off { background: #efefef; border-color: #ddd; color: #999; }
.wifi { color: #4479fb; margin: 0 1px 0 5px; }
.plate-line { padding: 0 3px 0 4px; gap: 11px; }
.filaments { display: grid; grid-template-columns: 1fr 1fr; gap: 3px 9px; padding: 11px 5px 12px; }
.fil { display: flex; align-items: center; gap: 2px; }
.chip { width: 12px; height: 12px; margin-right: 1px; flex: none; font-size: 7px; line-height: 12px; text-align: center; font-weight: 400; color: #fff; }
.c1 { background: #0080ff; }
.c2 { background: #00ffff; color: #222; }
.c3 { background: #c0c0c0; color: #222; }
.c4 { background: #fff; color: #222; border: 1px solid #888; line-height: 10px; }
.c5 { background: #000; }
.c6 { background: #ffff00; color: #222; }
.c7 { background: #ff0000; }
.c8 { background: #0000ff; }
.scope { display: flex; margin-left: 16px; height: 12px; border-radius: 6px; background: #d5d5d5; font-size: 8px; line-height: 11px; color: #666; }
.scope button { width: 20px; line-height: 11px; }
.scope .on { width: 22px; border-radius: 6px; background: #4479fb; color: #fff; }
.pale { color: #a9bffa; margin-left: 1px; }
.list-btn { color: #333; }
.search { display: flex; align-items: center; height: 15px; border: 1px solid #aaa; padding: 0 3px 0 3px; gap: 2px; }
.search input { flex: 1; font-size: 7px; line-height: 10px; padding-bottom: 1px; color: #333; }
.search input::placeholder { color: #444; opacity: 1; }
.clear { border-radius: 50%; background: #8a8a8a; color: #fff; }
.tree { border: solid #999; border-width: 0 1px 1px; background: #efefef; }
.tree-view { display: flex; height: 109px; overflow: hidden; background: #fff; }
.tree table { flex: 1; border-collapse: collapse; table-layout: fixed; width: 100%; font-size: 8px; line-height: 12px; color: #111; }
.col-check { width: 18px; }
.col-fil { width: 29px; }
.col-end { width: 9px; }
.tree th { height: 14px; padding: 0 0 0 3px; text-align: left; font-weight: 400; border-right: 1px solid #ddd; white-space: nowrap; }
.tree th:last-child { border: 0; }
.tree td { height: 13px; padding: 0 0 0 16px; }
.tree td.group { padding-left: 1px; }
.group .ico { display: inline-block; width: 7px; height: 7px; margin-right: 3px; }
.tree td:nth-child(2), .tree td:last-child { padding: 0 0 0 5px; }
.tree td.num { padding: 0; text-align: center; color: #fff; background: #0080ff; border: solid #fff; border-width: 0 1px 1px 2px; font-size: 7px; }
.sel { background: #a0a0a0; }
.tree td input, .box { appearance: none; display: block; width: 8px; height: 8px; background: #4479fb; }
.tree td input::after { content: ""; display: block; width: 5px; height: 3px; margin: 2px 0 0 1px; border: solid #fff; border-width: 0 0 1px 1px; transform: rotate(-45deg); }
.vbar { width: 9px; padding: 10px 4px; background: #f3f3f3; }
.vbar i { display: block; width: 1px; height: 11px; background: #888; }
.hbar { height: 10px; padding: 4px 30px 0 10px; }
.hbar i { display: block; height: 2px; background: #999; }
.tabs { display: flex; gap: 15px; padding-left: 8px; border-bottom: 1px solid #ddd; color: #666; }
.tabs button { height: 17px; width: 20px; white-space: nowrap; border-bottom: 2px solid transparent; }
.tabs .on { border-color: #4479fb; color: #222; font-weight: 700; }
.fields { display: grid; grid-template-columns: 101px 72px; gap: 2px 0; padding: 7px 0 0 15px; align-items: center; }
.fields label { height: 16px; line-height: 16px; }
.field { display: flex; align-items: center; height: 16px; padding: 0 5px 0 4px; border: 1px solid #e2e2e2; }
.field input { flex: 1; width: 20px; }
.field em { font-style: normal; font-size: 7px; color: #888; }
.spin { padding-left: 1px; gap: 5px; }
.spin .ico { width: 8px; height: 14px; color: #999; }
.box { width: 10px; height: 10px; border: 1px solid #ccc; background: #fff; }

.stage { position: relative; flex: 1; min-width: 0; overflow: hidden; background: #e6e6e6; }
.scene { position: absolute; inset: 0; width: 100%; height: 100%; }
.plate-light { fill: #d0d0d0; }
.plate-dark { fill: #414545; stroke: #333; stroke-width: 2; }
.line-light, .line-dark { fill: none; stroke: #dedede; stroke-width: .8; }
.line-dark { stroke: #666a6a; }
.bold { stroke-width: 1; stroke: #ebebeb; }
.line-dark.bold { stroke: #858a8a; }
.plate-ico { fill: none; stroke: #777; stroke-width: 2; }
.plate-ico .solid, .solid { fill: #555; }
.pencil { fill: none; stroke: #7f9df5; stroke-width: 1.5; }
.plate-no { font: italic 700 10px Inter, sans-serif; fill: #4479fb; }
.plate-no .small { font-size: 7px; }

.toolbar { position: relative; display: flex; align-items: center; width: 526px; height: 27px; margin: 0 auto; padding: 0 5px 0 3px; background: #fafafa; color: #555; }
.toolbar button { display: block; width: 20px; height: 20px; }
.toolbar svg { display: block; width: 20px; height: 20px; padding: 1px; fill: none; stroke: currentColor; }
.toolbar button:disabled { color: #d5d5d5; }
.toolbar .paper { fill: #fafafa; }
.toolbar .tint { fill: #e5e5e5; }
.toolbar .dark { fill: #777; }
.tools { display: flex; justify-content: space-between; }
.four { width: 92px; }
.three { width: 67px; margin-left: 9px; }
.many { flex: 1; }
.rule { width: 1px; height: 17px; margin: 0 10px 0 11px; background: #bbb; }

.menu { position: absolute; left: 314px; top: 92px; width: 136px; margin: 0; padding: 1px 0 3px; list-style: none; background: #f9f9f9; border-radius: 3px; box-shadow: 0 1px 4px #0004; font-size: 7px; color: #111; }
.menu li { position: relative; display: flex; align-items: center; height: 13px; padding: 0 14px 0 22px; }
.menu .sep { height: 1px; margin: 3px 5px 2px; padding: 0; background: #ddd; }
.menu .off { color: #aaa; }
.menu kbd { margin-left: auto; font: inherit; }
.menu .arrow { width: 6px; height: 6px; margin: 0 -7px 0 auto; stroke-width: 1.2; }
.menu .mark { position: absolute; left: 4px; color: #666; }
.dot { fill: #4479fb; stroke: none; }
.menu .hot { background: #efefef; }
.hot::after { content: ""; position: absolute; inset: -4px 0 -3px -3px; border: 2px solid #ff2a1c; border-radius: 3px; }

.info { position: absolute; right: 4px; bottom: 4px; display: flex; justify-content: space-between; width: 223px; padding: 2px 4px 4px; border: 1px solid #a08cf0; border-left: 5px solid #4d2fe8; border-radius: 3px; background: #fff; font-size: 8px; line-height: 9px; color: #222; }
.info dl { margin: 0; }
.info dl div { display: flex; gap: 4px; }
.info .wide-gap { gap: 7px; }
.info dd { margin: 0; }
.info sup { font-size: 5px; line-height: 0; }
.info-btns { display: flex; flex-direction: column; align-items: flex-end; justify-content: space-between; }
.x { width: 15px; height: 15px; border-radius: 50%; background: #e6e6e6; display: grid; place-items: center; color: #777; }
.min { width: 7px; height: 7px; margin-right: 1px; border-radius: 50%; background: linear-gradient(#e2e2e2 3px, #aaa 3px, #aaa 4px, #e2e2e2 4px); }
```

FILE: scene.js
```js
// Build beds in perspective: corners run top-left, top-right, bottom-right, bottom-left.
const beds = [
  { dark: true, q: [[438, 167], [592, 167], [584, 270], [391, 270]] },
  { q: [[612, 169], [771, 169], [784, 269], [600, 269]] },
  { q: [[801, 168], [952, 168], [998, 269], [821, 269]] },
  { q: [[381, 296], [567, 296], [534, 459], [303, 459]] },
  { q: [[604, 295], [789, 295], [813, 459], [581, 459]] },
  { q: [[827, 296], [1018, 296], [1091, 459], [859, 459]] }
];
const CELLS = 24.5;

function project([a, b, c, d]) {
  const dx1 = b[0] - c[0], dx2 = d[0] - c[0], sx = a[0] - b[0] + c[0] - d[0];
  const dy1 = b[1] - c[1], dy2 = d[1] - c[1], sy = a[1] - b[1] + c[1] - d[1];
  const det = dx1 * dy2 - dx2 * dy1;
  const g = (sx * dy2 - dx2 * sy) / det, h = (dx1 * sy - sx * dy1) / det;
  return (u, v) => {
    const w = g * u + h * v + 1;
    const x = (b[0] - a[0] + g * b[0]) * u + (d[0] - a[0] + h * d[0]) * v + a[0];
    const y = (b[1] - a[1] + g * b[1]) * u + (d[1] - a[1] + h * d[1]) * v + a[1];
    return (x / w).toFixed(1) + ' ' + (y / w).toFixed(1);
  };
}

document.getElementById('plates').innerHTML = beds.map(({ q, dark }) => {
  const at = project(q), tone = dark ? 'dark' : 'light';
  let thin = '', bold = '';
  for (let i = 1; i < CELLS; i++) {
    const t = i / CELLS;
    const seg = `M${at(t, 0)}L${at(t, 1)}M${at(0, 1 - t)}L${at(1, 1 - t)}`;
    if (i % 5) thin += seg; else bold += seg;
  }
  return `<path class="plate-${tone}" stroke-linejoin="round" d="M${q.map(p => p.join(' ')).join('L')}Z"/>` +
    `<path class="line-${tone}" d="${thin}"/><path class="line-${tone} bold" d="${bold}"/>`;
}).join('');
```
